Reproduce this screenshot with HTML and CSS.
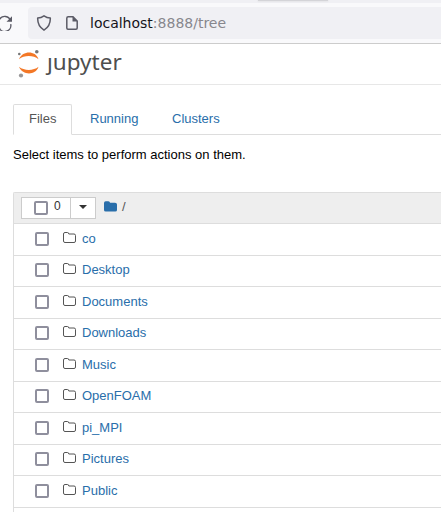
FILE: index.html
```
<!DOCTYPE html>
<html lang="en">
<head>
<meta charset="utf-8">
<title>Home</title>
<link rel="stylesheet" href="styles.css">
</head>
<body>
<svg class="defs" width="0" height="0" aria-hidden="true">
<symbol id="folder" viewBox="0 0 13 11"><path d="M.5 9V2Q.5.5 2 .5h2.4Q5.8.5 5.8 2h5.2Q12.5 2 12.5 3.5V9Q12.5 10.5 11 10.5H2Q.5 10.5.5 9Z" fill="none" stroke="#555"/></symbol>
</svg>
<div class="tabstrip"><span class="browser-tab"></span></div>
<div class="toolbar">
<svg class="reload" width="13" height="16" viewBox="0 0 13 16"><path d="M-.7 12.8A6 6 0 0 0 10.7 9.2M10.5 6A6 6 0 0 0-.5 4.3" fill="none" stroke="#5b5b66" stroke-width="1.4"/><path d="M12 1.2v5.5H6.5Z" fill="#5b5b66"/></svg>
<div class="urlbar">
<svg class="shield" width="16" height="16" viewBox="0 0 16 16"><path d="M8 .8c2 1.4 4 2.1 6.3 2.3.2 4.9-1.3 9.1-6.3 12.1C3 12.2 1.500 8 1.700 3.100 4 2.900 6 2.200 8 .8Z" fill="none" stroke="#5b5b66" stroke-width="1.5" stroke-linejoin="round"/></svg>
<svg class="page" width="12" height="14" viewBox="0 0 12 14"><path d="M2.200.8H7L11.200 5V12Q11.200 13.200 10 13.200H2Q.8 13.200.8 12V2.200Q.8.8 2.200.8Z" fill="none" stroke="#5b5b66" stroke-width="1.5"/><path d="M6.500.5V5.500H11.500Z" fill="#5b5b66"/></svg>
<span class="url"><b>localhost</b>:8888/tree</span>
</div>
</div>
<header class="header">
<svg width="24" height="30" viewBox="0 0 24 30"><path d="M2 11.200C4 6.500 8 4.500 12 4.500S20 6.500 21.500 11.200C16.500 7 7 7 2 11.200ZM2 18.800C7 23 16.500 23 21.500 18.800 20 23.500 16 25.500 12 25.500S4 23.500 2 18.800Z" fill="#f37726"/><circle cx="2.300" cy="6" r="1.300" fill="#767677"/><circle cx="19.800" cy="3.800" r="1.800" fill="#767677"/><circle cx="4" cy="27.500" r="2.100" fill="#989798"/></svg>
<span class="wordmark"><span class="stem">j</span>upyter</span>
</header>
<main class="main">
<nav class="tabs"><a class="tab active">Files</a><a class="tab running">Running</a><a class="tab clusters">Clusters</a></nav>
<p class="hint">Select items to perform actions on them.</p>
<section class="list">
<div class="list-head">
<div class="select"><span class="all"><i class="box"></i>0</span><span class="drop"><i class="caret"></i></span></div>
<svg class="home" width="13" height="11" viewBox="0 0 13 11"><path d="M0 9V2Q0 .3 1.700.3H4.300Q6 .3 6 1.800H11Q13 1.800 13 3.500V9Q13 10.500 11.300 10.500H1.700Q0 10.500 0 9Z" fill="#296eaa"/></svg>
<span class="slash">/</span>
</div>
<div class="row"><i class="box"></i><svg class="icon"><use href="#folder"/></svg><a>co</a></div>
<div class="row"><i class="box"></i><svg class="icon"><use href="#folder"/></svg><a>Desktop</a></div>
<div class="row"><i class="box"></i><svg class="icon"><use href="#folder"/></svg><a>Documents</a></div>
<div class="row"><i class="box"></i><svg class="icon"><use href="#folder"/></svg><a>Downloads</a></div>
<div class="row"><i class="box"></i><svg class="icon"><use href="#folder"/></svg><a>Music</a></div>
<div class="row"><i class="box"></i><svg class="icon"><use href="#folder"/></svg><a>OpenFOAM</a></div>
<div class="row"><i class="box"></i><svg class="icon"><use href="#folder"/></svg><a>pi_MPI</a></div>
<div class="row"><i class="box"></i><svg class="icon"><use href="#folder"/></svg><a>Pictures</a></div>
<div class="row"><i class="box"></i><svg class="icon"><use href="#folder"/></svg><a>Public</a></div>
</section>
</main>
</body>
</html>
```
FILE: styles.css
```
* { box-sizing: border-box; }
body { margin: 0; height: 512px; overflow: hidden; background: #fff; color: #000; font: 13px/20px "Liberation Sans", Arial, sans-serif; }
svg { display: block; flex: none; }
.defs { position: absolute; }
.tabstrip { height: 3px; background: #f0f0f4; overflow: hidden; }
.browser-tab { display: block; width: 70px; height: 1px; margin-left: 258px; background: #d4d4d8; box-shadow: 0 0 2px #ccc; }
.toolbar { display: flex; height: 41px; padding-top: 4px; background: #f9f9fb; border-bottom: 1px solid #ccc; }
.reload { margin: 8px 15px 0 0; }
.urlbar { flex: 1; display: flex; align-items: center; height: 32px; padding-left: 8px; background: #f0f0f4; border-radius: 4px 0 0 4px; }
.page { margin-left: 14px; }
.url { margin-left: 12px; font: 14px/20px "DejaVu Sans", sans-serif; color: #87878d; white-space: nowrap; }
.url b { font-weight: 400; color: #15141a; }
.header { display: flex; height: 41px; padding: 4px 0 0 17px; border-bottom: 1px solid #e7e7e7; }
.wordmark { margin: -1px 0 0 6px; font: 22.5px/30px "Noto Sans", sans-serif; color: #4e4e4e; }
.stem { display: inline-block; clip-path: inset(11px -5px -5px -5px); }
.main { padding: 19px 0 0 13px; }
.tabs { display: flex; height: 31px; border-bottom: 1px solid #ddd; color: #296eaa; }
.tab { line-height: 30px; }
.active { width: 59px; height: 31px; padding-left: 15px; border: 1px solid #ddd; border-bottom-color: #fff; border-radius: 2px 2px 0 0; background: #fff; color: #555; line-height: 28px; }
.running { width: 82px; margin-left: 18px; }
.hint { margin: 10px 0 27px; }
.list { height: 320px; border: 1px solid #ddd; border-right: 0; border-bottom: 0; border-radius: 2px 0 0 0; }
.list-head { display: flex; height: 30px; background: #eee; }
.select { display: flex; width: 75px; height: 22px; margin: 4px 0 0 7px; background: #fff; border: 1px solid #ccc; color: #333; font-size: 12px; line-height: 17px; }
.all { display: flex; width: 49px; padding-left: 12px; border-right: 1px solid #ccc; }
.box { width: 14px; height: 14px; border: 2px solid #8f8f9d; border-radius: 2px; background: #fff; flex: none; }
.all .box { margin: 3px 6px 0 0; }
.drop { flex: 1; padding: 7px 0 0 8px; }
.caret { display: block; width: 8px; border: 4px solid transparent; border-top-color: #333; border-bottom: 0; }
.home { margin: 8px 0 0 8px; }
.slash { margin: 4px 0 0 5px; color: #555; }
.row { display: flex; align-items: center; height: 31.5px; padding-left: 21px; border-top: 1px solid #ddd; color: #296eaa; }
.row:last-child { height: 32.5px; border-bottom: 1px solid #ddd; }
.row .box { margin-top: -1px; }
.icon { width: 13px; height: 11px; margin: -4px 6px 0 14px; }
.row a { margin-top: -1px; }
```
